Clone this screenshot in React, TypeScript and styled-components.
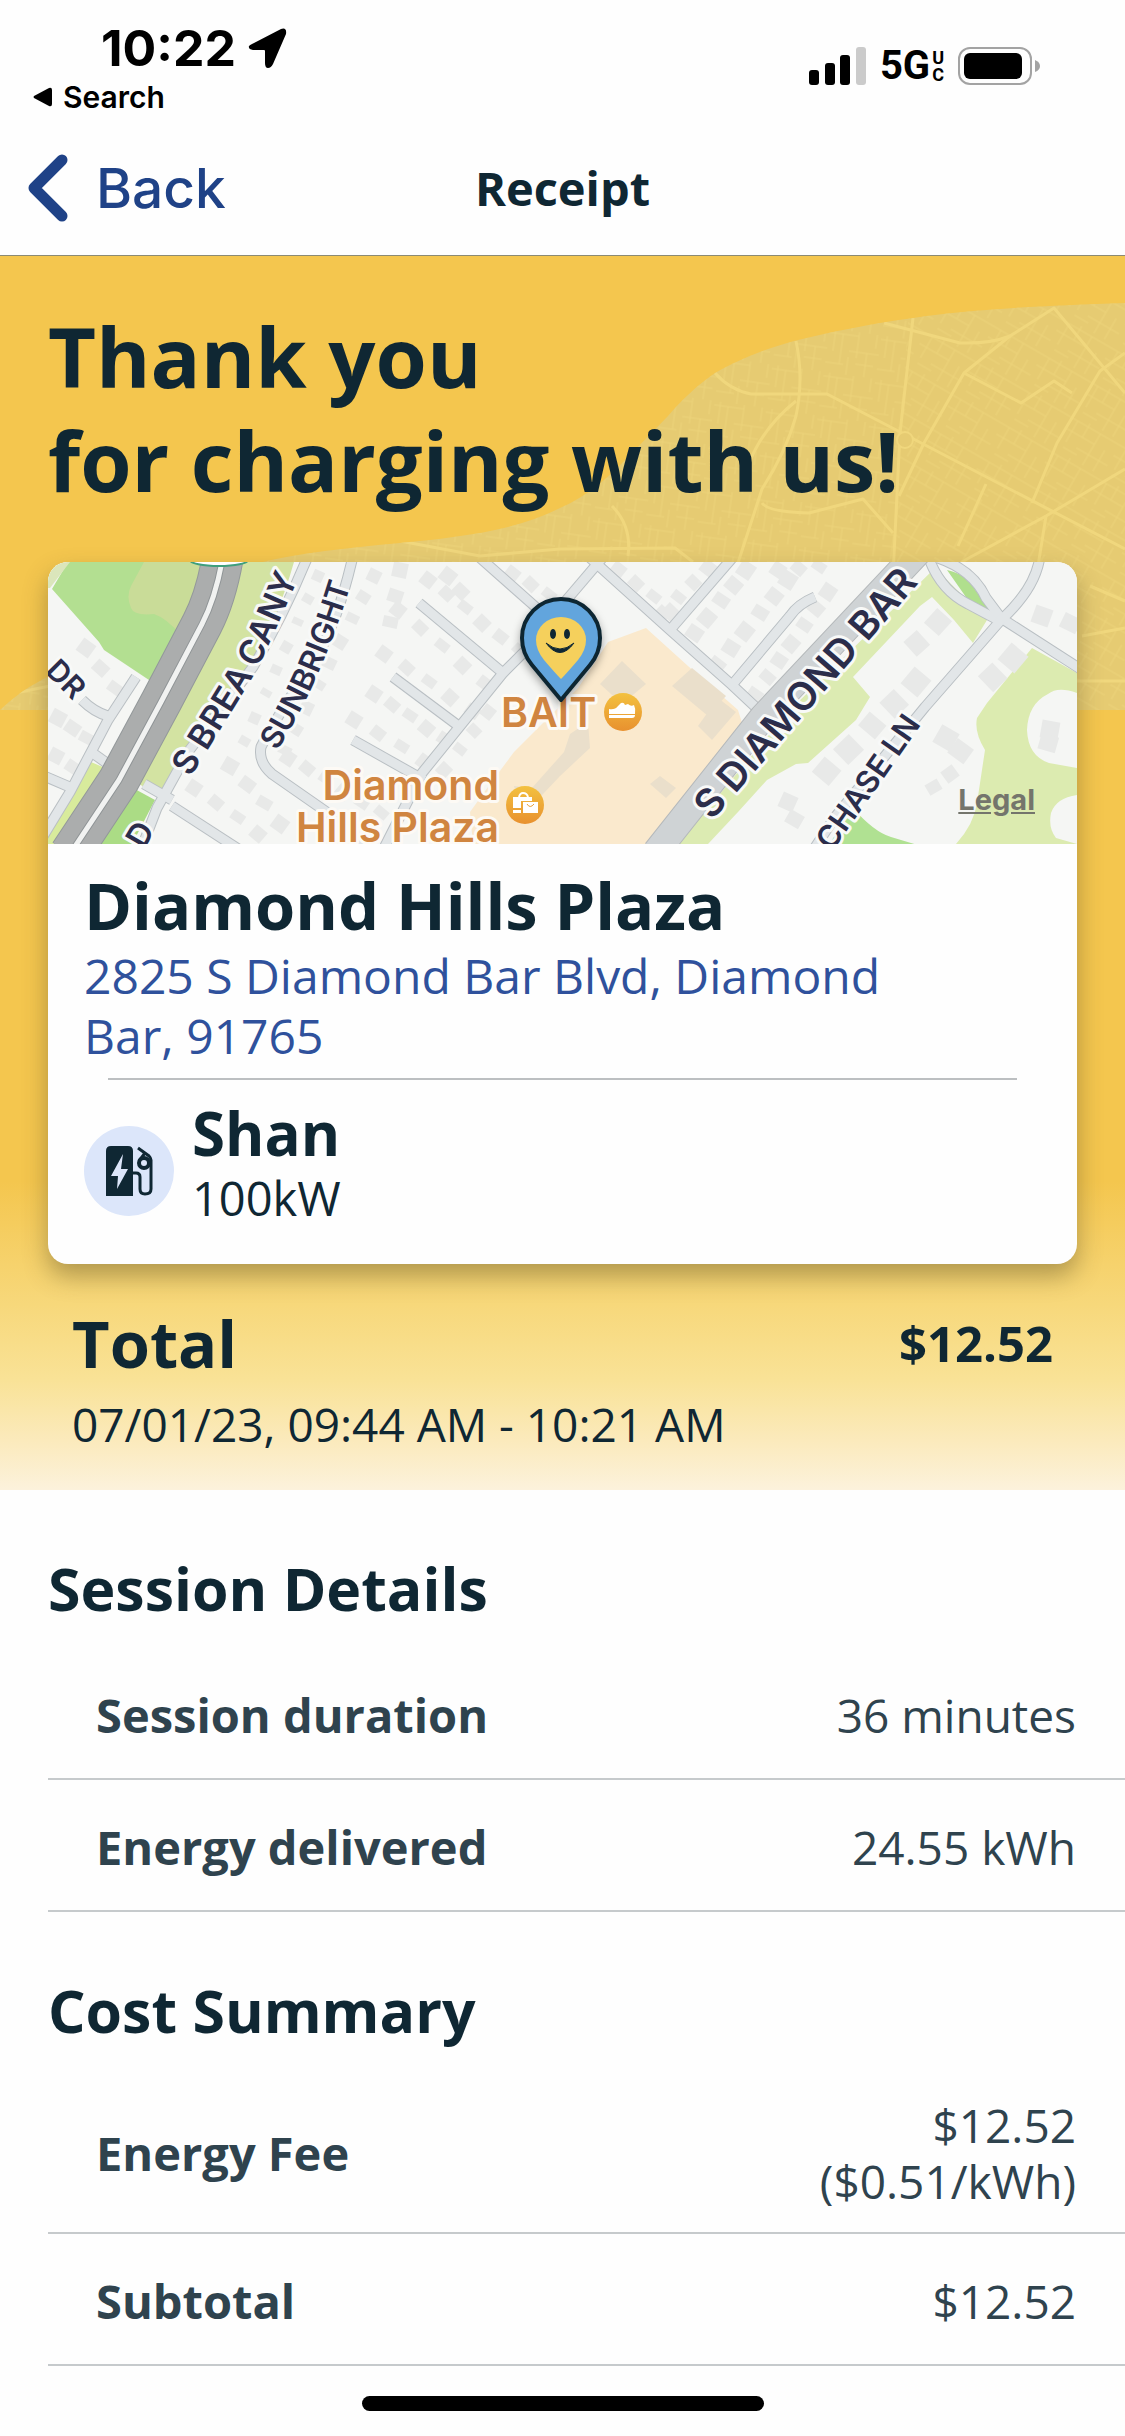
import React from 'react';
import styled, { createGlobalStyle } from 'styled-components';

const ink = '#0f2733';
const slate = '#2f434e';
const sans = `'Open Sans', 'Noto Sans', sans-serif`;
const system = `Inter, 'Liberation Sans', sans-serif`;

type Point = [number, number];
type Entry = { label: string; value: string[] };

const sessionDetails: Entry[] = [
	{ label: 'Session duration', value: ['36 minutes'] },
	{ label: 'Energy delivered', value: ['24.55 kWh'] },
];

const costSummary: Entry[] = [
	{ label: 'Energy Fee', value: ['$12.52', '($0.51/kWh)'] },
	{ label: 'Subtotal', value: ['$12.52'] },
];

const App: React.FC = () => (
	<Screen>
		<GlobalStyle />
		<StatusBar />
		<NavBar>
			<BackButton type="button">
				<svg width="44" height="72" viewBox="0 0 44 72" fill="none" aria-hidden="true">
					<path d="M36 8 L8 36 L36 64" stroke="#1f4287" strokeWidth="11" strokeLinecap="round" strokeLinejoin="round" />
				</svg>
				Back
			</BackButton>
			<NavTitle>Receipt</NavTitle>
		</NavBar>
		<Hero>
			<HeroArt />
			<HeroTitle>
				Thank you
				<br />
				for charging with us!
			</HeroTitle>
			<StationCard>
				<MapFrame>
					<StationMap />
					<LegalLink href="#legal">Legal</LegalLink>
				</MapFrame>
				<CardBody>
					<StationName>Diamond Hills Plaza</StationName>
					<Address href="#map">2825 S Diamond Bar Blvd, Diamond Bar, 91765</Address>
					<Divider />
					<Charger>
						<ChargerBadge>
							<ChargerIcon />
						</ChargerBadge>
						<div>
							<ChargerName>Shan</ChargerName>
							<ChargerPower>100kW</ChargerPower>
						</div>
					</Charger>
				</CardBody>
			</StationCard>
			<Totals>
				<TotalRow>
					<TotalLabel>Total</TotalLabel>
					<TotalAmount>$12.52</TotalAmount>
				</TotalRow>
				<TotalDate>07/01/23, 09:44 AM - 10:21 AM</TotalDate>
			</Totals>
		</Hero>
		<DetailSection title="Session Details" entries={sessionDetails} />
		<DetailSection title="Cost Summary" entries={costSummary} />
		<HomeIndicator />
	</Screen>
);

export default App;

const StatusBar: React.FC = () => (
	<StatusContainer>
		<div>
			<TimeRow>
				10:22
				<svg width="40" height="42" viewBox="0 0 40 42" aria-hidden="true">
					<path
						d="M4 17 L33 2 Q39 0 38 7 L25 37 Q23 41 20 41 Q17 41 17 36 V24 Q17 23 16 23 H5 Q0 22 1 19 Q2 18 4 17 Z"
						fill="#000"
					/>
				</svg>
			</TimeRow>
			<SearchButton type="button">
				<svg width="20" height="20" viewBox="0 0 20 20" aria-hidden="true">
					<path d="M1 9 L16 1 Q19 0 19 3 V17 Q19 20 16 19 L1 11 Q0 10 1 9 Z" fill="#000" />
				</svg>
				Search
			</SearchButton>
		</div>
		<StatusIcons>
			<svg width="57" height="40" viewBox="0 0 57 40" aria-hidden="true">
				<rect x="0" y="24" width="10" height="15" rx="3" />
				<rect x="16" y="17" width="10" height="22" rx="3" />
				<rect x="31" y="9" width="10" height="30" rx="3" />
				<rect x="47" y="1" width="10" height="38" rx="3" fill="#cbcbcb" />
			</svg>
			<Network>
				5G
				<NetworkSuffix>
					<span>U</span>
					<span>C</span>
				</NetworkSuffix>
			</Network>
			<svg width="82" height="40" viewBox="0 0 82 40" aria-hidden="true">
				<rect x="1" y="2" width="72" height="36" rx="11" fill="none" stroke="#a3a3a3" strokeWidth="2" />
				<rect x="6" y="7" width="58" height="26" rx="6" />
				<path d="M77 14 Q82 16 82 20 Q82 24 77 26 Z" fill="#a3a3a3" />
			</svg>
		</StatusIcons>
	</StatusContainer>
);

const DetailSection: React.FC<{ title: string; entries: Entry[] }> = ({ title, entries }) => (
	<Section>
		<SectionTitle>{title}</SectionTitle>
		<DetailList>
			{entries.map(({ label, value }) => (
				<DetailRow key={label}>
					<dt>{label}</dt>
					<dd>
						{value.map((line) => (
							<span key={line}>{line}</span>
						))}
					</dd>
				</DetailRow>
			))}
		</DetailList>
	</Section>
);

const ChargerIcon: React.FC = () => (
	<svg width="48" height="52" viewBox="0 0 48 52" fill="none" aria-hidden="true">
		<path d="M1 51 V6 Q1 1 6 1 H23 Q28 1 28 6 V51 Z" fill={ink} />
		<path d="M18 9 L6 31 H13 L12 44 L23 24 H16 Z" fill="#dce6fa" />
		<path
			d="M28 28 H31 Q35 28 35 32 V44 Q35 49 40 49 Q46 49 46 44 V15 Q46 13 44 11 L33 3"
			stroke={ink}
			strokeWidth="3"
		/>
		<circle cx="39" cy="18" r="5" stroke={ink} strokeWidth="4" />
		<path d="M40 8 L34 16" stroke={ink} strokeWidth="3" />
	</svg>
);

// City blob behind the heading, with its faint street grid
const HeroArt: React.FC = () => (
	<HeroDrawing viewBox="0 0 1125 470" preserveAspectRatio="xMaxYMin slice" aria-hidden="true">
		<defs>
			<clipPath id="blob">
				<path d="M1125 47 C1040 50 970 53 913 62 C870 68 830 76 794 85 C762 94 738 104 715 117 C696 130 682 144 668 160 L632 197 C608 222 588 240 560 252 C520 272 480 278 430 284 C350 292 290 296 230 315 L40 425 Q20 435 0 454 H1125 Z" />
			</clipPath>
			<pattern id="blocks" width="52" height="44" patternUnits="userSpaceOnUse" patternTransform="rotate(8)">
				<path
					d="M0 4 H30 M22 20 H52 M0 34 H18 M30 32 H48 M6 0 V22 M14 4 V34 M30 0 V26 M40 20 V44 M22 26 V44 M48 0 V14"
					stroke="#ecd379"
					strokeWidth="1"
					fill="none"
				/>
			</pattern>
			<pattern id="blocksAlt" width="56" height="40" patternUnits="userSpaceOnUse" patternTransform="rotate(30)">
				<path
					d="M0 4 H56 M0 16 H34 M20 28 H56 M8 4 V28 M20 0 V16 M34 4 V40 M46 16 V40 M8 34 H24"
					stroke="#ecd379"
					strokeWidth="1"
					fill="none"
				/>
			</pattern>
		</defs>
		<g clipPath="url(#blob)">
			<rect width="1125" height="470" fill="#e6cb72" />
			<path d="M0 0 H913 L900 177 L893 470 H0 Z" fill="url(#blocks)" />
			<path d="M913 0 H1125 V470 H893 L900 177 Z" fill="url(#blocksAlt)" />
			<g fill="none" stroke="#f0d77d" strokeWidth="3" strokeLinejoin="round">
				<path d="M913 62 L900 177 L893 320" />
				<path d="M796 85 Q804 122 796 160 Q786 196 762 233 L737 310" />
				<path d="M715 117 Q730 134 751 138 H827 L902 177 L1125 293" />
				<path d="M884 67 L960 87 Q990 88 1010 80 L1054 52 L1125 137" />
				<path d="M1010 80 L964 117 L924 187 L899 240" />
				<path d="M964 117 L1021 147 L1054 125 L1072 137" />
				<path d="M1125 97 L1100 115 L1057 187 L1032 247" />
				<path d="M1125 213 L1046 260 L967 303 L940 320" />
				<path d="M796 145 Q762 172 748 210" />
				<path d="M762 247 Q768 256 809 257 L863 243 L893 277" />
				<path d="M986 228 L958 290 M1046 260 L1038 310" />
				<path d="M400 285 L480 300 L560 293 L675 292 L693 306" />
				<path d="M612 250 Q632 270 628 300" />
				<path d="M1075 425 H1125 M1090 330 L1125 345 M1082 380 L1125 372" />
				<path d="M0 440 L60 428" />
			</g>
			<circle cx="905" cy="184" r="8" fill="#e6cb72" stroke="#f0d77d" strokeWidth="2" />
		</g>
	</HeroDrawing>
);

const roads = [
	'M260 -6 Q235 55 205 105 L140 190 L109 246 L92 290',
	'M305 -6 Q290 60 267 98 Q225 160 213 185 Q210 200 224 212 L290 258 L320 290',
	'M124 244 L195 290',
	'M96 222 L124 238',
	'M371 41 L455 111',
	'M345 115 L412 165',
	'M305 178 L376 218',
	'M500 66 L455 111 L374 211 L334 290',
	'M430 -6 L500 56',
	'M510 48 L556 -6',
	'M540 -6 L622 68 L684 123 L716 153',
	'M686 -6 L622 68',
	'M767 35 Q750 42 742 54 L684 123',
	'M880 -6 Q892 28 920 42 L950 58',
	'M890 -4 Q925 8 938 36 L953 56 L1034 108',
	'M992 -6 Q988 26 953 58 L877 145 L787 255 L764 290',
	'M-4 214 L24 226',
	'M88 115 L60 158 L22 230 L-6 276',
	'M34 138 Q46 150 60 154',
	'M46 192 L60 202',
];

// Rows of houses: start, end, how many, size and tilt
const houseRows: { from: Point; to: Point; count: number; size: number; tilt: number }[] = [
	{ from: [270, 14], to: [196, 180], count: 8, size: 11, tilt: 24 },
	{ from: [326, 14], to: [236, 190], count: 9, size: 13, tilt: 26 },
	{ from: [352, 8], to: [342, 62], count: 3, size: 15, tilt: 12 },
	{ from: [380, 18], to: [470, 90], count: 6, size: 14, tilt: 38 },
	{ from: [350, 48], to: [436, 122], count: 5, size: 14, tilt: 38 },
	{ from: [336, 92], to: [424, 150], count: 5, size: 14, tilt: 36 },
	{ from: [326, 132], to: [396, 178], count: 5, size: 14, tilt: 34 },
	{ from: [306, 158], to: [376, 200], count: 4, size: 14, tilt: 32 },
	{ from: [240, 196], to: [332, 252], count: 6, size: 14, tilt: 34 },
	{ from: [146, 226], to: [210, 272], count: 4, size: 14, tilt: 34 },
	{ from: [182, 204], to: [232, 262], count: 4, size: 15, tilt: 30 },
	{ from: [400, 14], to: [412, 30], count: 2, size: 15, tilt: 38 },
	{ from: [440, 150], to: [396, 208], count: 4, size: 13, tilt: 38 },
	{ from: [464, 12], to: [500, 34], count: 3, size: 14, tilt: 38 },
	{ from: [570, 8], to: [622, 50], count: 4, size: 14, tilt: 38 },
	{ from: [660, 6], to: [614, 52], count: 4, size: 14, tilt: 38 },
	{ from: [698, 8], to: [646, 72], count: 5, size: 16, tilt: 34 },
	{ from: [740, 18], to: [668, 104], count: 6, size: 16, tilt: 32 },
	{ from: [780, 30], to: [706, 134], count: 7, size: 15, tilt: 34 },
	{ from: [730, 8], to: [770, 6], count: 3, size: 14, tilt: 34 },
	{ from: [890, 60], to: [868, 82], count: 2, size: 20, tilt: 42 },
	{ from: [868, 120], to: [778, 210], count: 5, size: 22, tilt: 40 },
	{ from: [965, 96], to: [944, 116], count: 2, size: 22, tilt: 40 },
	{ from: [898, 176], to: [912, 190], count: 2, size: 20, tilt: 30 },
	{ from: [994, 54], to: [1022, 62], count: 2, size: 18, tilt: 20 },
	{ from: [902, 212], to: [886, 226], count: 2, size: 14, tilt: -36 },
	{ from: [740, 240], to: [746, 258], count: 2, size: 16, tilt: 24 },
	{ from: [1002, 168], to: [1000, 182], count: 2, size: 18, tilt: 10 },
	{ from: [38, 86], to: [66, 128], count: 3, size: 15, tilt: 36 },
	{ from: [10, 156], to: [38, 178], count: 3, size: 15, tilt: 28 },
	{ from: [8, 194], to: [24, 206], count: 2, size: 14, tilt: 28 },
];

const Houses: React.FC = () => (
	<g fill="#e8e9e8">
		{houseRows.flatMap(({ from, to, count, size, tilt }, row) =>
			Array.from({ length: count }, (_, i) => {
				const t = count > 1 ? i / (count - 1) : 0;
				const x = from[0] + (to[0] - from[0]) * t;
				const y = from[1] + (to[1] - from[1]) * t;
				return (
					<rect
						key={`${row}-${i}`}
						x={x - size / 2}
						y={y - size / 2}
						width={size}
						height={size - (i % 3) * 2}
						transform={`rotate(${tilt + (i % 2) * 6} ${x} ${y})`}
					/>
				);
			}),
		)}
	</g>
);

const StationMap: React.FC = () => (
	<MapDrawing viewBox="0 0 1029 282" preserveAspectRatio="xMidYMid slice" role="img" aria-label="Map of Diamond Hills Plaza">
		<defs>
			<linearGradient id="poi" x1="0" y1="0" x2="0" y2="1">
				<stop offset="0" stopColor="#f3c13f" />
				<stop offset="1" stopColor="#e8912f" />
			</linearGradient>
			<filter id="pinShadow" x="-30%" y="-20%" width="160%" height="150%">
				<feDropShadow dx="0" dy="4" stdDeviation="4" floodOpacity="0.35" />
			</filter>
			<path id="breaPath" d="M142 216 Q186 146 209 108 Q232 60 262 -12" />
			<path id="sunbrightPath" d="M229 189 Q280 110 314 -16" />
		</defs>
		<rect width="1029" height="282" fill="#f5f6f4" />

		<path d="M0 0 H160 L120 110 L104 120 L56 88 L51 80 L4 27 L20 0 Z" fill="#b3df91" />
		<path d="M0 0 H22 L2 26 H0 Z" fill="#dbe6bb" />
		<path d="M96 0 H165 L132 72 Q118 56 106 52 Q86 54 83 46 Q78 34 83 24 Z" fill="#c9dc98" />
		<path d="M190 0 H246 Q226 70 196 110 L140 190 L112 232 L86 220 L150 100 Z" fill="#d3e3a2" />
		<path d="M43 200 L57 206 L16 282 H-4 L0 270 Z" fill="#d8eb9c" />
		<path d="M85 226 L107 238 L80 290 H40 Z" fill="#abdc85" />
		<path d="M598 66 L560 80 L530 126 L466 190 L440 225 L422 250 L425 282 H605 L700 180 L690 148 L640 104 Z" fill="#fae9cd" />
		<path d="M887 6 L939 58 L925 81 L906 58 L884 35 L872 44 L805 115 L822 135 L808 158 L760 201 L748 202 L719 218 L690 250 L660 282 H630 L740 150 Z" fill="#dcebb2" />
		<path d="M984 86 L1029 111 V131 Q1010 124 1000 132 Q980 142 979 168 Q980 194 1001 201 L1029 206 V233 Q1008 236 1003 251 Q1000 266 1008 276 L1029 282 H908 Q926 262 929 241 L937 188 Q926 170 929 156 L939 141 Z" fill="#dcebb0" />
		<path d="M899 8 Q918 12 926 26 L946 54 L920 38 Z" fill="#b0df8d" />
		<path d="M805 246 Q826 270 843 275 L873 284 H780 Z" fill="#b0e192" />

		<Houses />
		<g fill="#eadfcb">
			<path d="M574 99 L598 122 L574 142 L552 122 Z" />
			<path d="M644 106 L678 134 L660 154 L624 124 Z" />
			<path d="M670 136 L688 150 L664 178 L650 164 Z" />
			<path d="M612 214 L628 226 L618 236 L602 222 Z" />
			<path d="M540 160 L542 186 L512 214 L478 250 L470 240 L466 224 L484 226 L516 190 L522 172 Z" />
		</g>

		<g fill="none" strokeLinejoin="round">
			{roads.map((d) => (
				<path key={d} d={d} stroke="#b9bfc3" strokeWidth="11" />
			))}
			{roads.map((d) => (
				<path key={d} d={d} stroke="#e2e6e8" strokeWidth="9" />
			))}
			<path d="M872 -12 L715 155 L608 290" stroke="#b5b9bb" strokeWidth="28" />
			<path d="M872 -12 L715 155 L608 290" stroke="#cfd3d5" strokeWidth="26" />
			<path d="M175 -6 Q168 35 154 62 L113 140 L71 218 L22 292" stroke="#93989a" strokeWidth="42" />
			<path d="M175 -6 Q168 35 154 62 L113 140 L71 218 L22 292" stroke="#abadad" strokeWidth="40" />
			<path d="M175 -6 Q168 35 154 62 L113 140 L71 218 L22 292" stroke="#8f9496" strokeWidth="7" />
			<path d="M175 -6 Q168 35 154 62 L113 140 L71 218 L22 292" stroke="#f1f2f1" strokeWidth="5" />
		</g>
		<ellipse cx="171" cy="-2" rx="29" ry="6" fill="#fff" stroke="#3f9f7c" strokeWidth="2" />

		<RoadLabel fontSize="34">
			<textPath href="#breaPath">S BREA CANY</textPath>
		</RoadLabel>
		<RoadLabel fontSize="31">
			<textPath href="#sunbrightPath">SUNBRIGHT</textPath>
		</RoadLabel>
		<RoadLabel fontSize="30" transform="translate(-4 110) rotate(45)">DR</RoadLabel>
		<RoadLabel fontSize="32" transform="translate(96 288) rotate(-60)">D</RoadLabel>
		<RoadLabel fontSize="39" transform="translate(664 259) rotate(-49)">S DIAMOND BAR</RoadLabel>
		<RoadLabel fontSize="31" transform="translate(784 290) rotate(-55)">CHASE LN</RoadLabel>

		<PlaceLabel x="453" y="165">BAIT</PlaceLabel>
		<PlaceLabel x="451" y="238" textAnchor="end">Diamond</PlaceLabel>
		<PlaceLabel x="451" y="280" textAnchor="end">Hills Plaza</PlaceLabel>

		<circle cx="575" cy="150" r="19" fill="url(#poi)" />
		<path d="M561 152 V147 Q567 148 570 144 L573 141 Q576 140 577 143 L580 142 Q583 145 586 143 Q588 147 587 152 Z" fill="#fff" />
		<path d="M561 153 H587 Q587 156 584 156 H561 Z" fill="#fff" />
		<circle cx="477" cy="243" r="19" fill="url(#poi)" />
		<path d="M465 235 H484 V239 H473 V246 H465 Z" fill="#fff" />
		<path d="M471 235 Q472 231 475 231 Q479 231 480 235" stroke="#fff" strokeWidth="2" fill="none" />
		<path d="M465 248 H473 V251 H465 Z" fill="#fff" />
		<path d="M475 240 H490 V251 H475 Z" fill="#fff" />
		<path d="M479 242 Q482 247 486 242" stroke="#e9a035" strokeWidth="1" fill="none" />

		<g filter="url(#pinShadow)">
			<path
				d="M513 138 Q508 132 484 103 Q474 91 474 76 A39 39 0 0 1 552 76 Q552 91 542 103 Q518 132 513 138 Z"
				fill="#62a5dd"
				stroke={ink}
				strokeWidth="4"
				strokeLinejoin="round"
			/>
		</g>
		<path d="M513 117 Q508 112 496 98 Q488 88 488 78 A25 23 0 0 1 538 78 Q538 88 530 98 Q518 112 513 117 Z" fill="#f5d05c" />
		<ellipse cx="505" cy="72" rx="3" ry="5" fill={ink} />
		<ellipse cx="519" cy="72" rx="3" ry="5" fill={ink} />
		<path d="M498 81 Q512 100 526 81 Q512 93 498 81 Z" fill={ink} stroke={ink} strokeWidth="1" />
	</MapDrawing>
);

const GlobalStyle = createGlobalStyle`
	* {
		box-sizing: border-box;
	}
	body {
		margin: 0;
		background-color: #fff;
	}
	h1, h2, h3, p, dl, dd {
		margin: 0;
	}
	button {
		padding: 0;
		border: none;
		background: none;
		cursor: pointer;
	}
`;
const Screen = styled.div`
	display: flex;
	flex-direction: column;
	width: 100%;
	min-height: 100vh;
	background-color: #fefefe;
	color: ${ink};
	font-family: ${sans};
`;
const StatusContainer = styled.header`
	display: flex;
	justify-content: space-between;
	align-items: flex-start;
	padding: 18px 85px 4px 33px;
	color: #000;
	font-family: ${system};
`;
const TimeRow = styled.div`
	display: flex;
	align-items: center;
	gap: 12px;
	padding-left: 68px;
	font-size: 50px;
	font-weight: 700;
	line-height: 60px;
`;
const SearchButton = styled.button`
	display: flex;
	align-items: center;
	gap: 10px;
	color: #000;
	font-family: ${system};
	font-size: 30px;
	font-weight: 600;
	line-height: 38px;
`;
const StatusIcons = styled.div`
	display: flex;
	align-items: center;
	gap: 14px;
	padding-top: 28px;
`;
const Network = styled.div`
	display: flex;
	align-items: center;
	gap: 2px;
	font-family: Roboto, sans-serif;
	font-size: 40px;
	font-weight: 700;
	line-height: 40px;
`;
const NetworkSuffix = styled.span`
	display: flex;
	flex-direction: column;
	font-size: 18px;
	line-height: 17px;
`;
const NavBar = styled.nav`
	display: grid;
	grid-template-columns: 1fr auto 1fr;
	align-items: center;
	height: 136px;
	padding: 0 26px;
	border-bottom: 1px solid #8b8a74;
`;
const BackButton = styled.button`
	display: flex;
	align-items: center;
	justify-self: start;
	gap: 26px;
	color: #1f4287;
	font-family: ${system};
	font-size: 55px;
	font-weight: 500;
	line-height: 72px;
`;
const NavTitle = styled.h1`
	font-size: 47px;
	font-weight: 700;
	line-height: 74px;
`;
const Hero = styled.main`
	position: relative;
	padding: 48px 48px 36px;
	background: linear-gradient(#f4c64e 75%, #f7d87b 85%, #f9e296 91%, #fbeabc 96%, #fcf2dc 100%);
`;
const HeroDrawing = styled.svg`
	position: absolute;
	top: 0;
	left: 0;
	width: 100%;
	height: 470px;
`;
const HeroTitle = styled.h2`
	position: relative;
	font-size: 83px;
	font-weight: 700;
	line-height: 104px;
`;
const StationCard = styled.section`
	position: relative;
	margin-top: 50px;
	border-radius: 20px;
	background-color: #fefefe;
	box-shadow: 0 12px 24px rgba(90, 80, 40, 0.45);
	overflow: hidden;
`;
const MapFrame = styled.div`
	position: relative;
	height: 282px;
`;
const MapDrawing = styled.svg`
	display: block;
	width: 100%;
	height: 100%;
`;
const LegalLink = styled.a`
	position: absolute;
	right: 42px;
	bottom: 26px;
	color: #74756c;
	font-family: ${system};
	font-size: 29px;
	font-weight: 700;
	line-height: 36px;
`;
const RoadLabel = styled.text`
	fill: #2b2d4b;
	stroke: #f8f9f8;
	stroke-width: 6px;
	stroke-linejoin: round;
	paint-order: stroke;
	font-family: ${system};
	font-weight: 600;
`;
const PlaceLabel = styled.text`
	fill: #d08540;
	stroke: #fdfaf5;
	stroke-width: 6px;
	stroke-linejoin: round;
	paint-order: stroke;
	font-family: ${system};
	font-size: 41px;
	font-weight: 600;
`;
const CardBody = styled.div`
	padding: 20px 36px 38px;
`;
const StationName = styled.h3`
	font-size: 65px;
	font-weight: 700;
	line-height: 82px;
`;
const Address = styled.a`
	display: block;
	max-width: 860px;
	color: #2f519c;
	font-size: 48px;
	line-height: 60px;
	text-decoration: none;
`;
const Divider = styled.hr`
	height: 2px;
	margin: 12px 24px 16px;
	border: none;
	background-color: #bcbfc1;
`;
const Charger = styled.div`
	display: flex;
	align-items: flex-end;
	gap: 18px;
`;
const ChargerBadge = styled.div`
	display: flex;
	justify-content: center;
	align-items: center;
	width: 90px;
	height: 90px;
	margin-bottom: 10px;
	border-radius: 50%;
	background-color: #dce6fa;
`;
const ChargerName = styled.p`
	font-size: 60px;
	font-weight: 700;
	line-height: 74px;
`;
const ChargerPower = styled.p`
	font-size: 47px;
	line-height: 56px;
`;
const Totals = styled.section`
	padding: 38px 24px 0;
`;
const TotalRow = styled.div`
	display: flex;
	justify-content: space-between;
	align-items: center;
`;
const TotalLabel = styled.h3`
	font-size: 65px;
	font-weight: 700;
	line-height: 82px;
`;
const TotalAmount = styled.p`
	font-size: 49px;
	font-weight: 700;
	line-height: 60px;
`;
const TotalDate = styled.p`
	margin-top: 10px;
	font-size: 46px;
	line-height: 60px;
`;
const Section = styled.section`
	padding: 58px 0 0 48px;
`;
const SectionTitle = styled.h2`
	font-size: 59px;
	font-weight: 700;
	line-height: 80px;
`;
const DetailList = styled.dl`
	margin-top: 20px;
`;
const DetailRow = styled.div`
	display: flex;
	justify-content: space-between;
	align-items: center;
	min-height: 132px;
	padding: 27px 49px 23px 48px;
	border-bottom: 2px solid #c6cacc;
	color: ${slate};

	dt {
		font-size: 47px;
		font-weight: 700;
		line-height: 56px;
	}

	dd {
		display: flex;
		flex-direction: column;
		align-items: flex-end;
		font-size: 46px;
		line-height: 56px;
	}
`;
const HomeIndicator = styled.div`
	width: 402px;
	height: 15px;
	margin: 30px auto 24px;
	border-radius: 8px;
	background-color: #000;
`;
